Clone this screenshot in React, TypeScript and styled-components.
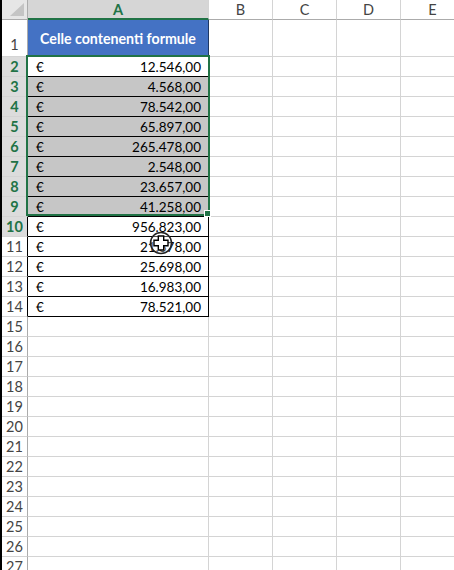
import React from "react";
import styled, { createGlobalStyle } from "styled-components";

const GlobalStyle = createGlobalStyle`
  html, body { margin: 0; padding: 0; background: #ffffff; overflow: hidden; }
  * { box-sizing: border-box; }
`;

const GREEN = "#217346";
const GRID = "#d4d4d4";
const FONT = `Lato, "Open Sans", "Liberation Sans", sans-serif`;

const Sheet = styled.div`
  position: relative;
  width: 454px;
  height: 570px;
  overflow: hidden;
  border-left: 2px solid #000;
  display: grid;
  grid-template-columns: 26px 181px 64px 64px 64px 64px;
  grid-template-rows: 20px 37px repeat(26, 20px);
  font-family: ${FONT};
  font-size: 13.5px;
  color: #000;
`;

const Corner = styled.div`
  background: #e6e6e6;
  border-right: 1px solid #ababab;
  border-bottom: 1px solid #ababab;
  display: flex;
  align-items: flex-end;
  justify-content: flex-end;
  padding: 0 3px 3px 0;
`;

const ColHeader = styled.div<{ $selected?: boolean }>`
  display: flex;
  align-items: center;
  justify-content: center;
  background: ${(p) => (p.$selected ? "#d6d6d6" : "#ffffff")};
  color: ${(p) => (p.$selected ? GREEN : "#444")};
  font-weight: ${(p) => (p.$selected ? 700 : 400)};
  font-size: 14.5px;
  border-right: 1px solid ${GRID};
  border-bottom: ${(p) => (p.$selected ? `2px solid ${GREEN}` : "1px solid #ababab")};
  padding-top: ${(p) => (p.$selected ? "1px" : "0")};
`;

type Edge = "sel" | "data" | "none";

const RowHeader = styled.div<{ $selected?: boolean; $edge: Edge; $tall?: boolean }>`
  display: flex;
  align-items: ${(p) => (p.$tall ? "flex-end" : "center")};
  justify-content: center;
  padding-bottom: ${(p) => (p.$tall ? "3px" : "0")};
  background: ${(p) => (p.$selected ? "#dcdcdc" : "#ffffff")};
  color: ${(p) => (p.$selected ? GREEN : "#444")};
  font-weight: ${(p) => (p.$selected ? 700 : 400)};
  font-size: 14.5px;
  border-bottom: 1px solid ${GRID};
  border-right: 1px solid
    ${(p) => (p.$edge === "sel" ? GREEN : p.$edge === "data" ? "#000" : "#ababab")};
`;

const TitleCell = styled.div`
  display: flex;
  align-items: center;
  justify-content: center;
  background: #4472c4;
  color: #ffffff;
  font-weight: 700;
  font-size: 14.2px;
  border-right: 1px solid #1f3864;
  border-bottom: 1px solid #000;
`;

const DataCell = styled.div<{ $shaded?: boolean }>`
  display: flex;
  align-items: center;
  justify-content: space-between;
  padding: 1px 7px 0 8px;
  background: ${(p) => (p.$shaded ? "#c6c6c6" : "#ffffff")};
  border-right: 1px solid #000;
  border-bottom: 1px solid #000;
`;

const EmptyCell = styled.div`
  border-right: 1px solid ${GRID};
  border-bottom: 1px solid ${GRID};
`;

const Selection = styled.div`
  position: absolute;
  left: 24px;
  top: 55px;
  width: 184px;
  height: 161px;
  border: 2px solid ${GREEN};
  pointer-events: none;
`;

const FillHandle = styled.div`
  position: absolute;
  left: 202px;
  top: 210px;
  width: 7px;
  height: 7px;
  background: ${GREEN};
  border: 1px solid #ffffff;
`;

const Cursor = styled.svg`
  position: absolute;
  left: 145px;
  top: 229px;
`;

const values = [
  "12.546,00",
  "4.568,00",
  "78.542,00",
  "65.897,00",
  "265.478,00",
  "2.548,00",
  "23.657,00",
  "41.258,00",
  "956.823,00",
  "21.378,00",
  "25.698,00",
  "16.983,00",
  "78.521,00",
];

const cols = ["A", "B", "C", "D", "E"];

export default function App() {
  const rows: React.ReactNode[] = [];

  rows.push(
    <Corner key="corner">
      <svg width="14" height="13" viewBox="0 0 14 13">
        <polygon points="14,0 14,13 0,13" fill="#c4c4c4" />
      </svg>
    </Corner>
  );
  cols.forEach((c) =>
    rows.push(
      <ColHeader key={`h${c}`} $selected={c === "A"}>
        {c}
      </ColHeader>
    )
  );

  rows.push(
    <RowHeader key="r1" $edge="none" $tall>
      1
    </RowHeader>
  );
  rows.push(<TitleCell key="t1">Celle contenenti formule</TitleCell>);
  for (let i = 1; i < cols.length; i++) rows.push(<EmptyCell key={`e1-${i}`} />);

  for (let r = 2; r <= 27; r++) {
    const value = values[r - 2];
    const selected = r >= 2 && r <= 10;
    const edge: Edge = r >= 2 && r <= 9 ? "sel" : value ? "data" : "none";
    rows.push(
      <RowHeader key={`r${r}`} $selected={selected} $edge={edge}>
        {r}
      </RowHeader>
    );
    if (value) {
      rows.push(
        <DataCell key={`a${r}`} $shaded={r >= 3 && r <= 9}>
          <span>€</span>
          <span>{value}</span>
        </DataCell>
      );
    } else {
      rows.push(<EmptyCell key={`a${r}`} />);
    }
    for (let i = 1; i < cols.length; i++) rows.push(<EmptyCell key={`e${r}-${i}`} />);
  }

  return (
    <>
      <GlobalStyle />
      <Sheet>
        {rows}
        <Selection />
        <FillHandle />
        <Cursor width="28" height="28" viewBox="0 0 28 28">
          <circle cx="14" cy="14" r="10.5" fill="rgba(255,255,255,0.3)" stroke="#222" strokeWidth="1.5" />
          <path
            d="M11.3 7 H16.7 V11.3 H21 V16.7 H16.7 V21 H11.3 V16.7 H7 V11.3 H11.3 Z"
            fill="#ffffff"
            stroke="#000"
            strokeWidth="1.4"
            strokeLinejoin="miter"
          />
        </Cursor>
      </Sheet>
    </>
  );
}
